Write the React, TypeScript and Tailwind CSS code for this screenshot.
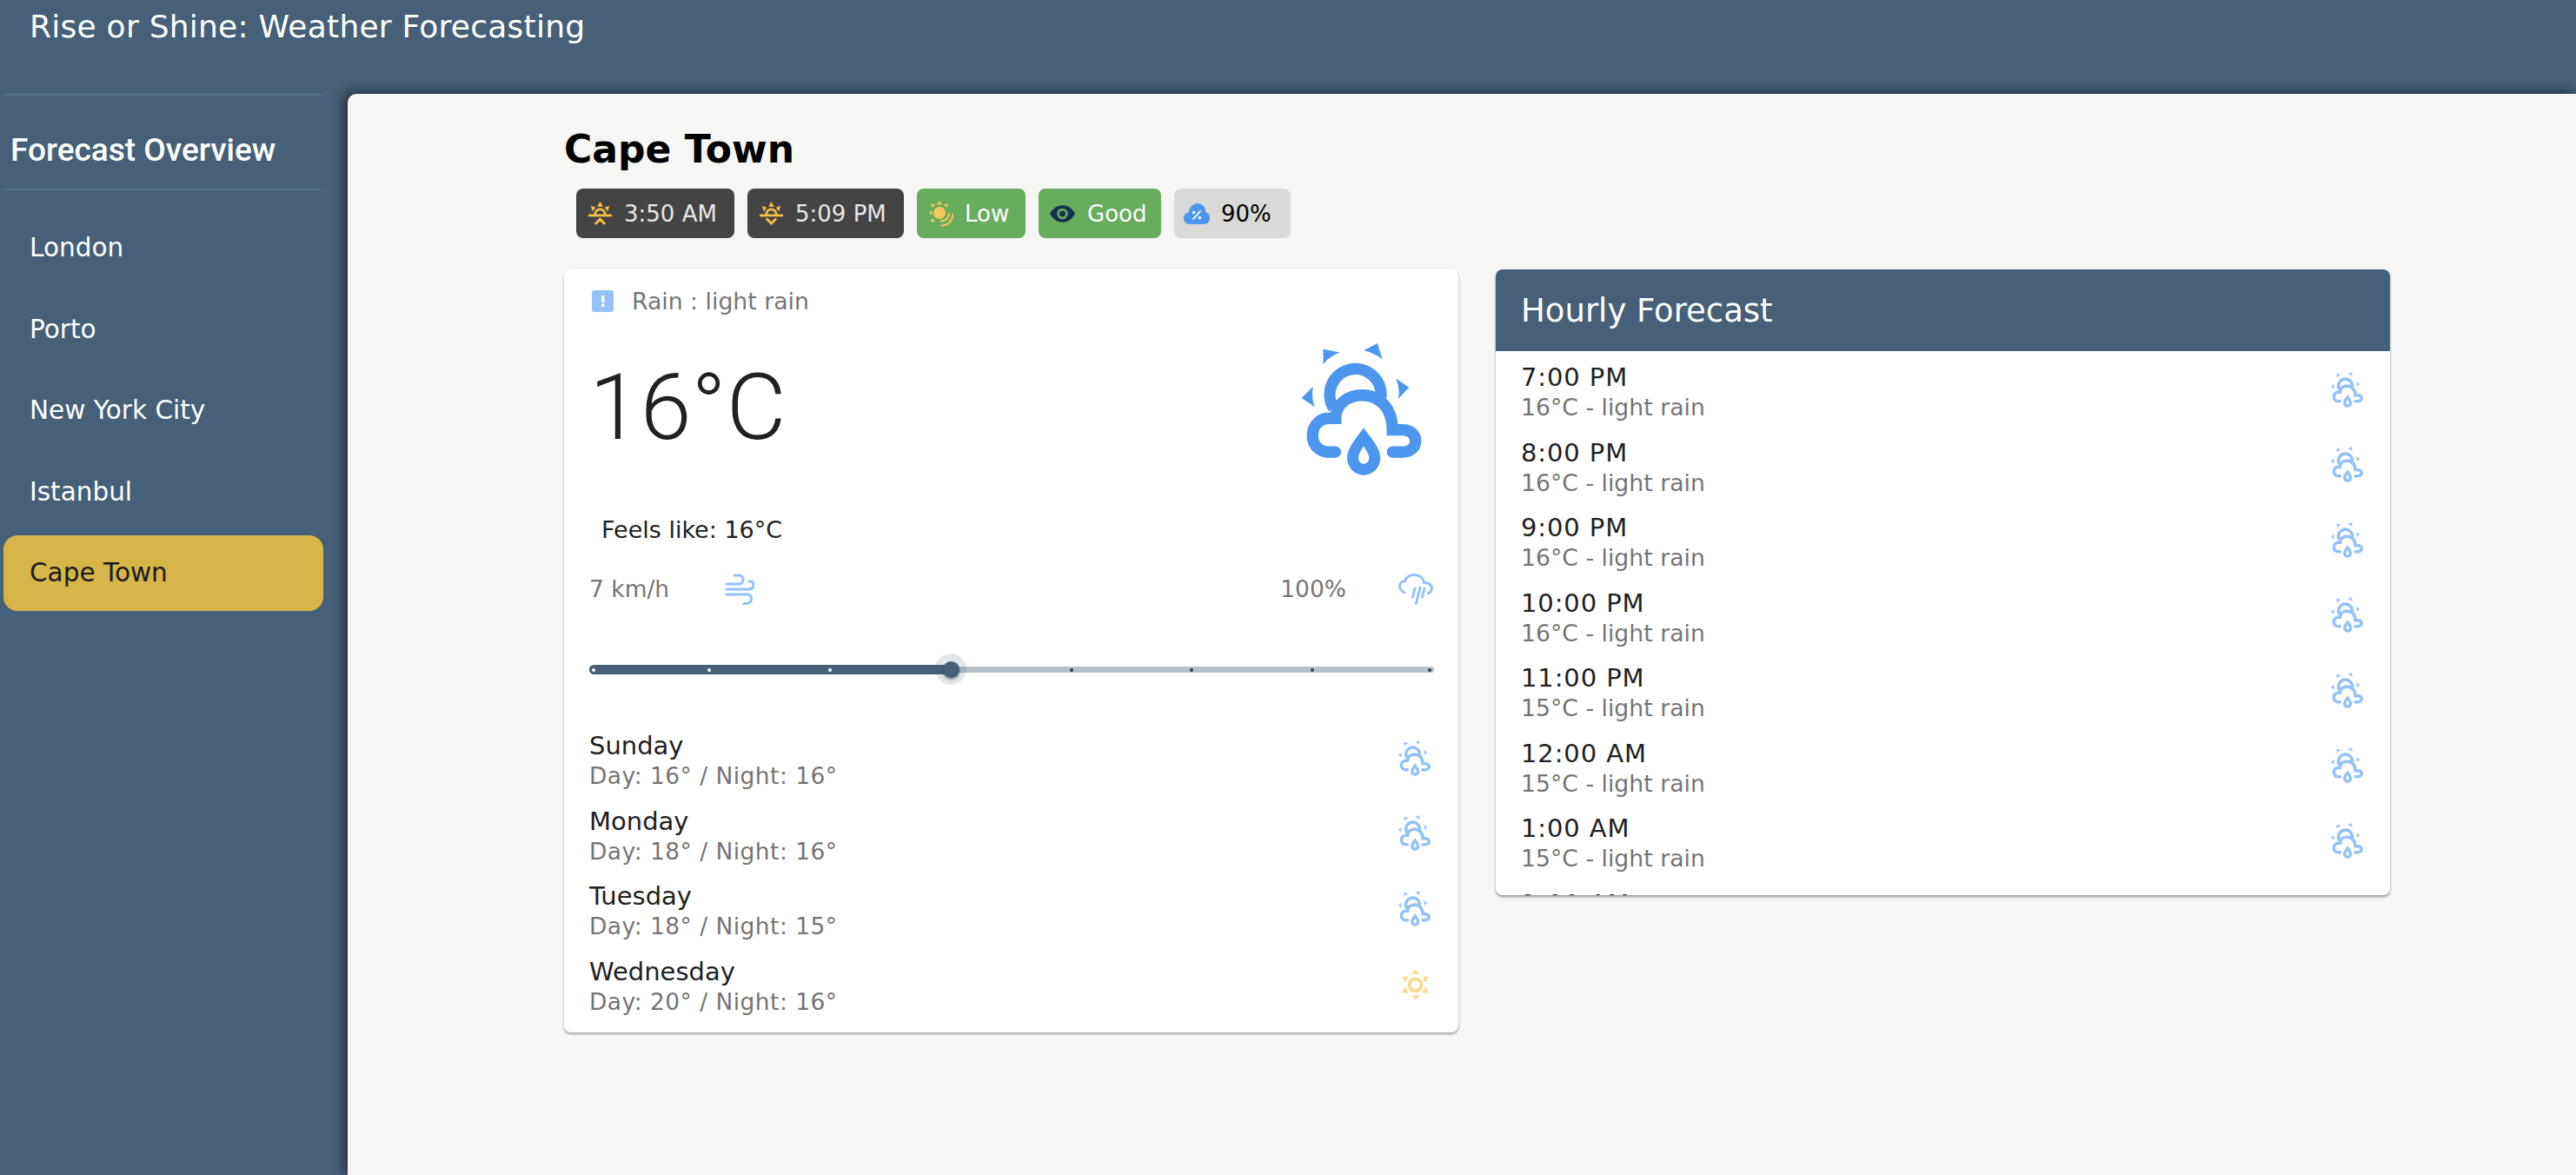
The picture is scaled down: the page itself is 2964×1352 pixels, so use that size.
import React from 'react';

const cities = ['London', 'Porto', 'New York City', 'Istanbul', 'Cape Town'];

const daily = [
  { day: 'Sunday', temps: 'Day: 16° / Night: 16°', sunny: false },
  { day: 'Monday', temps: 'Day: 18° / Night: 16°', sunny: false },
  { day: 'Tuesday', temps: 'Day: 18° / Night: 15°', sunny: false },
  { day: 'Wednesday', temps: 'Day: 20° / Night: 16°', sunny: true },
];

const hourly = [
  { time: '7:00 PM', desc: '16°C - light rain' },
  { time: '8:00 PM', desc: '16°C - light rain' },
  { time: '9:00 PM', desc: '16°C - light rain' },
  { time: '10:00 PM', desc: '16°C - light rain' },
  { time: '11:00 PM', desc: '15°C - light rain' },
  { time: '12:00 AM', desc: '15°C - light rain' },
  { time: '1:00 AM', desc: '15°C - light rain' },
  { time: '2:00 AM', desc: '15°C - light rain' },
];

const RainSunIcon = ({ className }: { className: string }) => (
  <svg viewBox="175 75 415 458" className={className} fill="none">
    <path d="M250 95 L308 107 Q272 120 250 148 Z M390 100 L438 75 L455 130 Q425 108 390 100 Z M502 197 L548 228 L510 268 Q518 232 502 197 Z M175 265 L215 225 Q208 262 220 295 Z" fill="currentColor" />
    <path d="M286 300 A89 89 0 1 1 450 262" stroke="currentColor" strokeWidth="40" />
    <path d="M292 452 H268 C236 452 213 428 213 395 C213 360 238 335 270 335 H293 C293 285 335 255 385 255 C445 255 490 300 490 375 H525 C552 375 570 392 570 414 C570 436 552 452 525 452 H490" stroke="currentColor" strokeWidth="40" strokeLinecap="round" />
    <path d="M390 368 C360 408 333 440 333 473 C333 506 358 532 390 532 C422 532 448 506 448 473 C448 440 420 408 390 368 Z M390 432 C378 450 372 462 372 473 C372 484 380 493 390 493 C401 493 409 484 409 473 C409 462 402 450 390 432 Z" fill="currentColor" fillRule="evenodd" />
  </svg>
);

const SunIcon = ({ className }: { className: string }) => (
  <svg viewBox="157 821 94 108" className={className} fill="none">
    <circle cx="204" cy="876" r="21" stroke="currentColor" strokeWidth="12" />
    <path d="M204 822 L218 838 H190 Z M204 928 L190 912 H218 Z M158 847 H180 L168 868 Z M250 847 L240 868 L228 847 Z M158 904 L168 882 L180 904 Z M250 904 H228 L240 882 Z" fill="currentColor" />
  </svg>
);

const SunriseIcon = ({ down }: { down?: boolean }) => (
  <svg viewBox="0 0 28 28" className="w-[27px] h-[27px] shrink-0 text-[#f6c044]" fill="none">
    <path d="M14 0 L17.500 6 H10.500 Z M3 5 L8.500 7 L5 12 Z M25 5 L23 12 L19.500 7 Z" fill="currentColor" />
    <path d="M8 16 C8 7 20 7 20 16" stroke="currentColor" strokeWidth="3" />
    <path d="M1 16.500 H27" stroke="currentColor" strokeWidth="3" strokeLinecap="round" />
    {down ? (
      <path d="M9 21 L14 26 L19 21" stroke="currentColor" strokeWidth="3" strokeLinecap="round" />
    ) : (
      <path d="M9 26 L14 21 L19 26" stroke="currentColor" strokeWidth="3" strokeLinecap="round" />
    )}
  </svg>
);

const UvIcon = () => (
  <svg viewBox="0 0 28 30" className="w-[28px] h-[30px] shrink-0 text-[#f6c65b]" fill="none">
    <circle cx="12" cy="14" r="7" fill="currentColor" />
    <path d="M12 0 L15 4.5 H9 Z M2 3 L7 4.5 L3.5 8 Z M22 3 L20.5 8 L17 4.5 Z M0 14 L3.5 11 V17 Z M2 25 L3.5 20 L7 23.5 Z" fill="currentColor" />
    <path d="M14 23.5 C19 23 22 20 23 15 M14.5 28.5 C22 28 27 23 27.5 16" stroke="currentColor" strokeWidth="2.2" strokeLinecap="round" />
  </svg>
);

const EyeIcon = () => (
  <svg viewBox="0 0 30 20" className="w-[29px] h-[20px] shrink-0" fill="none">
    <path d="M0 10 C4 3 9 0 15 0 C21 0 26 3 30 10 C26 17 21 20 15 20 C9 20 4 17 0 10 Z" fill="#13304f" />
    <circle cx="15" cy="10" r="6.5" fill="#68ac5d" />
    <circle cx="15" cy="10" r="3.6" fill="#13304f" />
  </svg>
);

const CloudPercentIcon = () => (
  <svg viewBox="0 0 30 24" className="w-[30px] h-[24px] shrink-0" fill="none">
    <path d="M7 24 C3 24 0 21 0 17 C0 13.500 2.500 11 5.500 10.500 C6.500 4.500 11 0 16 0 C21 0 25 4 25.500 10 C28 11 30 13.500 30 17 C30 21 27 24 23 24 Z" fill="#4c97ed" />
    <path d="M11 18 L19 9" stroke="#ffffff" strokeWidth="1.8" strokeLinecap="round" />
    <circle cx="11.500" cy="10.500" r="1.700" fill="#ffffff" />
    <circle cx="18.500" cy="16.500" r="1.700" fill="#ffffff" />
  </svg>
);

const WindIcon = () => (
  <svg viewBox="0 0 34 36" className="w-[34px] h-[36px] shrink-0 text-[#93c2f8]" fill="none" stroke="currentColor" strokeWidth="3" strokeLinecap="round">
    <path d="M11 2 H16 C20 2 21 5 21 7 C21 10 19 12 16 12 H2" />
    <path d="M2 18 H27 C31 18 33 16 33 13 C33 10 31 8.500 28 9" />
    <path d="M2 24 H27 C29 24 30.500 26 30.500 29 C30.500 32 28.500 34.500 25 34.500 H22" />
  </svg>
);

const RainCloudIcon = () => (
  <svg viewBox="0 0 40 36" className="w-[40px] h-[36px] shrink-0 text-[#93c2f8]" fill="none" stroke="currentColor" strokeWidth="3" strokeLinecap="round">
    <path d="M7 22 C3.500 20 1.500 18 1.500 14.500 C1.500 11 4 8.500 7.500 8.500 C9 4 13.500 1.500 18.500 1.500 C24.500 1.500 29 5.500 29.500 10.500 C33.500 10 38.500 12.500 38.500 17 C38.500 19.500 37 21.500 34.500 23" />
    <path d="M19 17 L16.500 27 M25 16 L20.500 34.500 M30 17 L27.500 27" />
  </svg>
);

const AlertIcon = () => (
  <span className="ml-[3px] w-[25px] h-[25px] shrink-0 rounded-[3px] bg-[#93c2f8] flex items-center justify-center text-white text-[18px] font-bold leading-none">
    !
  </span>
);

const Chip = ({ icon, label, className }: { icon: React.ReactNode; label: string; className: string }) => (
  <div className={`h-[57px] rounded-[8px] flex items-center ${className}`}>
    {icon}
    <span className="text-[26px] leading-none">{label}</span>
  </div>
);

// mark positions along the 972px rail
const sliderMarks = [5, 138, 277, 416, 555, 693, 832, 967];

const App = () => {
  return (
    <div className="h-screen w-full overflow-hidden flex flex-col bg-[#456078] font-['DejaVu_Sans',sans-serif]">
      <header className="h-[108px] shrink-0 pl-[34px] pt-[10px]">
        <h1 className="text-[36px] leading-[42px] tracking-[0.25px] font-normal text-white">Rise or Shine: Weather Forecasting</h1>
      </header>

      <div className="flex flex-1 min-h-0">
        <aside className="w-[400px] shrink-0 text-white">
          <div className="mx-[4px] w-[366px] h-[111px] border-y-2 border-[#54708a] pt-[42px]">
            <span className="block ml-[8px] text-[37px] leading-[42px] font-['Roboto',sans-serif] font-medium">Forecast Overview</span>
          </div>
          <nav className="pt-[23px] pl-[4px] w-[372px] flex flex-col gap-[7px]">
            {cities.map(city => (
              <div
                key={city}
                className={`h-[86.5px] pl-[30px] flex items-center rounded-[16px] text-[29.5px] ${city === 'Cape Town' ? 'bg-[#d8b548] text-[#1a1a1a]' : ''}`}
              >
                {city}
              </div>
            ))}
          </nav>
        </aside>

        <main className="flex-1 bg-[#f6f6f4] rounded-tl-[10px] shadow-[-4px_-2px_14px_rgba(0,0,0,0.55)] pl-[249px] pt-[38px]">
          <h2 className="text-[44px] leading-[52px] font-bold text-black">Cape Town</h2>

          <div className="mt-[19px] ml-[14px] flex gap-[15px]">
            <Chip icon={<SunriseIcon />} label="3:50 AM" className="w-[182px] pl-[14px] gap-[14px] bg-[#444444] text-[#e8e8e8]" />
            <Chip icon={<SunriseIcon down />} label="5:09 PM" className="w-[180px] pl-[14px] gap-[14px] bg-[#444444] text-[#e8e8e8]" />
            <Chip icon={<UvIcon />} label="Low" className="w-[125px] pl-[14px] gap-[13px] bg-[#68ac5d] text-white" />
            <Chip icon={<EyeIcon />} label="Good" className="w-[141px] pl-[13px] gap-[14px] bg-[#68ac5d] text-white" />
            <Chip icon={<CloudPercentIcon />} label="90%" className="w-[134px] pl-[11px] gap-[13px] bg-[#d9d9d7] text-black" />
          </div>

          <div className="mt-[36px] flex items-start gap-[43px]">
            <section className="w-[1029px] h-[878px] rounded-[8px] bg-white shadow-[0_2px_3px_rgba(0,0,0,0.35)] px-[29px]">
              <div className="pt-[24px] flex items-center gap-[21px] text-[26.7px] leading-[25px] text-[#757575]">
                <AlertIcon />
                <span>Rain : light rain</span>
              </div>

              <div className="mt-[36px] flex items-start justify-between">
                <span className="mt-[18px] text-[106px] leading-[112px] font-light font-['Roboto',sans-serif] text-[#212121]">16°C</span>
                <RainSunIcon className="w-[139px] h-[152px] mr-[13px] text-[#4c97ed]" />
              </div>

              <p className="mt-[48px] ml-[14px] text-[27px] leading-[30px] text-[#212121]">Feels like: 16°C</p>

              <div className="mt-[35px] flex items-center text-[26.5px] leading-[36px] text-[#757575]">
                <span className="w-[156px]">7 km/h</span>
                <WindIcon />
                <span className="ml-auto mr-[60px]">100%</span>
                <RainCloudIcon />
              </div>

              <div className="relative mt-[69px] h-[11px] w-[972px]">
                <div className="absolute inset-x-0 top-[2px] h-[7px] rounded-full bg-[#b5c0cb]" />
                <div className="absolute left-0 top-0 h-[11px] w-[416px] rounded-full bg-[#456078]" />
                {sliderMarks.map((x, i) => (
                  <span
                    key={x}
                    className={`absolute top-[3.5px] w-[4px] h-[4px] rounded-full ${i < 3 ? 'bg-white' : 'bg-[#333f4b]'}`}
                    style={{ left: `${x - 2}px` }}
                  />
                ))}
                <span className="absolute left-[398px] top-[-13px] w-[36px] h-[36px] rounded-full bg-[#456078]/15" />
                <span className="absolute left-[407px] top-[-4px] w-[19px] h-[19px] rounded-full bg-[#456078] shadow-[0_2px_3px_rgba(0,0,0,0.4)]" />
              </div>

              <ul className="mt-[56px]">
                {daily.map(d => (
                  <li key={d.day} className="h-[86.5px] flex items-center justify-between">
                    <div>
                      <div className="text-[29px] leading-[36px] text-[#212121]">{d.day}</div>
                      <div className="text-[26.5px] tracking-[0.45px] leading-[34px] text-[#757575]">{d.temps}</div>
                    </div>
                    {d.sunny ? (
                      <SunIcon className="w-[31px] h-[36px] mr-[5px] mb-[4px] text-[#fdd98c]" />
                    ) : (
                      <RainSunIcon className="w-[37px] h-[41px] mr-[3px] mb-[6px] text-[#93c2f8]" />
                    )}
                  </li>
                ))}
              </ul>
            </section>

            <section className="w-[1029px] h-[720px] rounded-[8px] bg-white shadow-[0_2px_3px_rgba(0,0,0,0.4)] overflow-hidden">
              <div className="h-[94px] bg-[#456078] pl-[29px] pt-[2px] flex items-center text-[37px] text-white">Hourly Forecast</div>
              <ul className="px-[29px] pt-[4px]">
                {hourly.map(h => (
                  <li key={h.time} className="h-[86.5px] flex items-center justify-between">
                    <div>
                      <div className="text-[29px] tracking-[0.9px] leading-[36px] text-[#212121]">{h.time}</div>
                      <div className="text-[26.7px] leading-[34px] text-[#757575]">{h.desc}</div>
                    </div>
                    <RainSunIcon className="w-[37px] h-[41px] mr-[2px] mb-[6px] text-[#93c2f8]" />
                  </li>
                ))}
              </ul>
            </section>
          </div>
        </main>
      </div>
    </div>
  );
};

export default App;
